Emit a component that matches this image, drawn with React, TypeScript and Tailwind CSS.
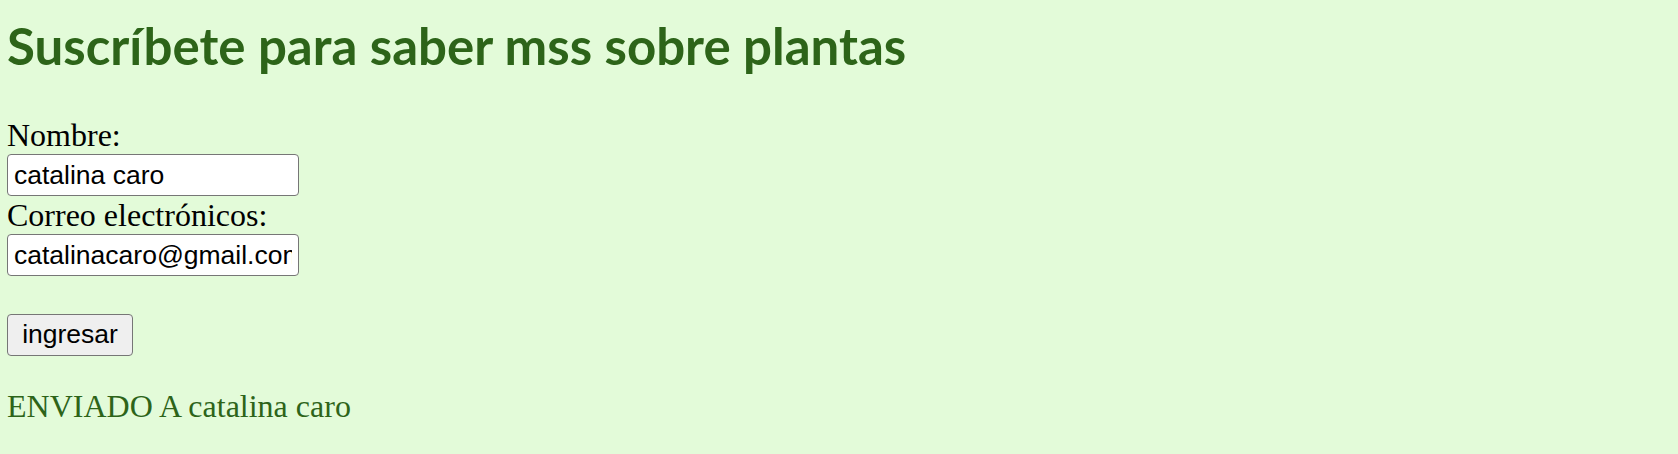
import { useState } from "react";

export default function App() {
  const [nombre, setNombre] = useState("catalina caro");
  const [correo, setCorreo] = useState("catalinacaro@gmail.com");

  return (
    <div className="h-[454px] w-full overflow-hidden bg-[#e3fbd9] px-[7px] pt-[22px] font-['Liberation_Serif',serif] text-black">
      <h1 className="mb-[46px] whitespace-nowrap font-['Lato',sans-serif] text-[51px] leading-[48px] font-bold text-[#2d6419]">
        Suscríbete para saber mss sobre plantas
      </h1>

      <form className="flex flex-col items-start" onSubmit={(e) => e.preventDefault()}>
        <label className="text-[32px] leading-[38px]">Nombre:</label>
        <input
          value={nombre}
          onChange={(e) => setNombre(e.target.value)}
          className="h-[42px] w-[292px] rounded-[4px] border border-[#767676] bg-white px-[6px] font-['Liberation_Sans',sans-serif] text-[26.5px] text-black outline-none"
        />
        <label className="text-[32px] leading-[38px]">Correo electrónicos:</label>
        <input
          value={correo}
          onChange={(e) => setCorreo(e.target.value)}
          className="h-[42px] w-[292px] rounded-[4px] border border-[#767676] bg-white px-[6px] font-['Liberation_Sans',sans-serif] text-[26.5px] text-black outline-none"
        />
        <button
          type="submit"
          className="mt-[38px] h-[42px] w-[126px] rounded-[4px] border border-[#767676] bg-[#efefef] font-['Liberation_Sans',sans-serif] text-[26.5px] text-black"
        >
          ingresar
        </button>
      </form>

      <p className="mt-[31px] text-[32px] leading-[38px] text-[#2d6419]">ENVIADO A {nombre}</p>
    </div>
  );
}
